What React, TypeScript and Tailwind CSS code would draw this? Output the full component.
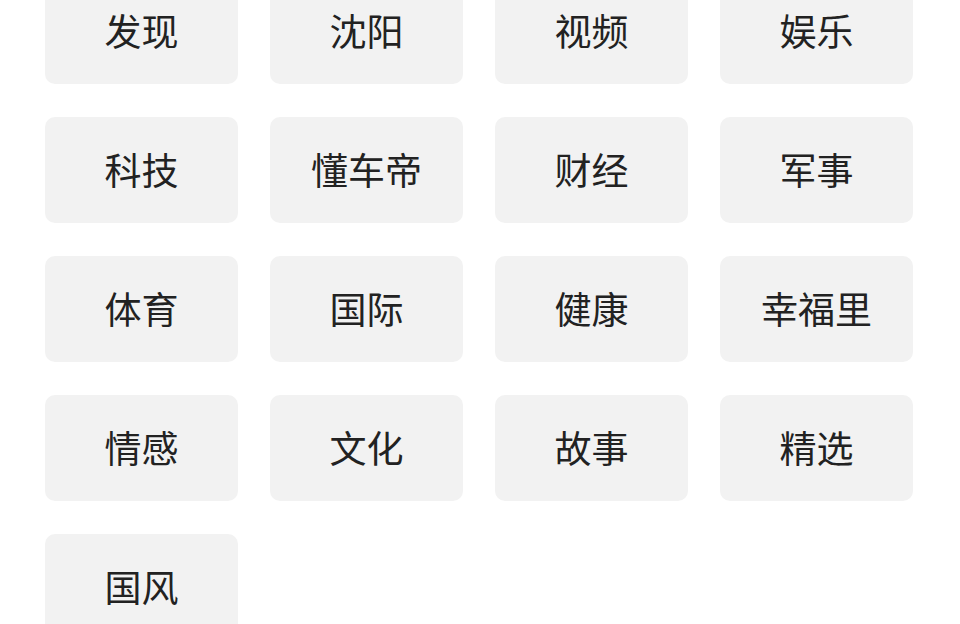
const channels = [
  "发现", "沈阳", "视频", "娱乐",
  "科技", "懂车帝", "财经", "军事",
  "体育", "国际", "健康", "幸福里",
  "情感", "文化", "故事", "精选",
  "国风",
];

export default function App() {
  return (
    <div className="h-[624px] w-[960px] overflow-hidden bg-white">
      <div
        className="-mt-[22px] grid grid-cols-[repeat(4,193px)] gap-x-[32px] gap-y-[33px] pl-[45px]"
        style={{ fontFamily: '"Noto Sans CJK SC", "Noto Sans", sans-serif' }}
      >
        {channels.map((name) => (
          <div
            key={name}
            className="flex h-[106px] items-center justify-center rounded-[10px] bg-[#f2f2f2] text-[37px] text-[#222222]"
          >
            {name}
          </div>
        ))}
      </div>
    </div>
  );
}
